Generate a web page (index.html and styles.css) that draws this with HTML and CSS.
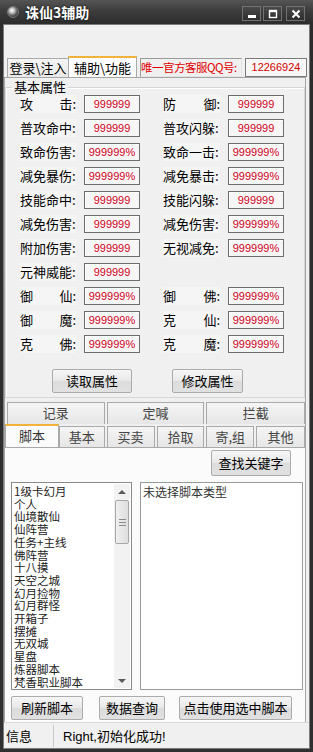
FILE: index.html
```html
<!DOCTYPE html>
<html lang="zh-CN">
<head>
    <meta charset="UTF-8">
    <title>诛仙3辅助</title>
    <link rel="stylesheet" href="styles.css">
</head>
<body>
<div class="window">

    <div class="titlebar">
        <span class="app-icon"></span>
        <span class="title">诛仙3辅助</span>
        <div class="win-btns">
            <span class="win-btn">
                <svg width="10" height="10" viewBox="0 0 10 10"><rect x="1" y="6" width="8" height="3" fill="#fff"/></svg>
            </span>
            <span class="win-btn">
                <svg width="10" height="10" viewBox="0 0 10 10"><rect x="1.5" y="1.5" width="7" height="7" fill="none" stroke="#fff" stroke-width="1.4"/><rect x="1" y="1" width="8" height="2.2" fill="#fff"/></svg>
            </span>
            <span class="win-btn close">
                <svg width="10" height="10" viewBox="0 0 10 10"><path d="M1.5 1.5 L8.5 8.5 M8.5 1.5 L1.5 8.5" stroke="#fff" stroke-width="2"/></svg>
            </span>
        </div>
    </div>

    <div class="client">
        <!-- top tab strip -->
        <div class="top-tabs">
            <div class="ttab">登录\注入</div>
            <div class="ttab active">辅助\功能</div>
            <div class="qq-label">唯一官方客服QQ号:</div>
            <div class="qq-input">12266924</div>
        </div>

        <div class="main-panel">
            <fieldset class="group">
                <legend>基本属性</legend>
                <div class="attr-grid">
                    <div class="lbl spread"><span>攻</span><span>击:</span></div><div class="val">999999</div><div></div>
                    <div class="lbl spread"><span>防</span><span>御:</span></div><div class="val">999999</div>

                    <div class="lbl">普攻命中:</div><div class="val">999999</div><div></div>
                    <div class="lbl">普攻闪躲:</div><div class="val">999999</div>

                    <div class="lbl">致命伤害:</div><div class="val">999999%</div><div></div>
                    <div class="lbl">致命一击:</div><div class="val">999999%</div>

                    <div class="lbl">减免暴伤:</div><div class="val">999999%</div><div></div>
                    <div class="lbl">减免暴击:</div><div class="val">999999%</div>

                    <div class="lbl">技能命中:</div><div class="val">999999</div><div></div>
                    <div class="lbl">技能闪躲:</div><div class="val">999999</div>

                    <div class="lbl">减免伤害:</div><div class="val">999999</div><div></div>
                    <div class="lbl">减免伤害:</div><div class="val">999999%</div>

                    <div class="lbl">附加伤害:</div><div class="val">999999</div><div></div>
                    <div class="lbl">无视减免:</div><div class="val">999999%</div>

                    <div class="lbl">元神威能:</div><div class="val">999999</div><div></div>
                    <div></div><div></div>

                    <div class="lbl spread"><span>御</span><span>仙:</span></div><div class="val">999999%</div><div></div>
                    <div class="lbl spread"><span>御</span><span>佛:</span></div><div class="val">999999%</div>

                    <div class="lbl spread"><span>御</span><span>魔:</span></div><div class="val">999999%</div><div></div>
                    <div class="lbl spread"><span>克</span><span>仙:</span></div><div class="val">999999%</div>

                    <div class="lbl spread"><span>克</span><span>佛:</span></div><div class="val">999999%</div><div></div>
                    <div class="lbl spread"><span>克</span><span>魔:</span></div><div class="val">999999%</div>
                </div>
                <div class="attr-actions">
                    <button class="btn btn-read">读取属性</button>
                    <button class="btn btn-write">修改属性</button>
                </div>
            </fieldset>

            <div class="sub-tabs">
                <div class="tab-row back">
                    <div class="stab wide">记录</div>
                    <div class="stab wide">定喊</div>
                    <div class="stab wide last">拦截</div>
                </div>
                <div class="tab-row front">
                    <div class="stab active">脚本</div>
                    <div class="stab first">基本</div>
                    <div class="stab">买卖</div>
                    <div class="stab">拾取</div>
                    <div class="stab">寄,组</div>
                    <div class="stab last">其他</div>
                </div>
            </div>

            <div class="script-panel">
                <div class="find-row">
                    <button class="btn btn-find">查找关键字</button>
                </div>
                <div class="lists">
                    <div class="listbox">
                        <div class="items">
                            <div>1级卡幻月</div>
                            <div>个人</div>
                            <div>仙境散仙</div>
                            <div>仙阵营</div>
                            <div>任务+主线</div>
                            <div>佛阵营</div>
                            <div>十八摸</div>
                            <div>天空之城</div>
                            <div>幻月捡物</div>
                            <div>幻月群怪</div>
                            <div>开箱子</div>
                            <div>摆摊</div>
                            <div>无双城</div>
                            <div>星盘</div>
                            <div>炼器脚本</div>
                            <div>梵香职业脚本</div>
                        </div>
                        <div class="vscroll">
                            <div class="arrow up"></div>
                            <div class="track">
                                <div class="thumb"><span></span><span></span><span></span></div>
                            </div>
                            <div class="arrow down"></div>
                        </div>
                    </div>
                    <div class="textbox">未选择脚本类型</div>
                </div>
                <div class="script-actions">
                    <button class="btn btn-refresh">刷新脚本</button>
                    <button class="btn btn-query">数据查询</button>
                    <button class="btn btn-use">点击使用选中脚本</button>
                </div>
            </div>
        </div>

        <div class="statusbar">
            <div class="status-key">信息</div>
            <div class="status-msg">Right,初始化成功!</div>
        </div>
    </div>
</div>
</body>
</html>
```

FILE: styles.css
```css
* {
    box-sizing: border-box;
}

body {
    margin: 0;
    background-color: #2b2b2b;
    font-family: "Noto Sans CJK SC", "Liberation Sans", sans-serif;
    font-size: 13px;
    color: #000;
}

.window {
    width: 313px;
    height: 752px;
    display: flex;
    flex-direction: column;
    background: linear-gradient(#555 0, #3e3e3e 10px, #2c2c2c 24px, #303030 100%);
    overflow: hidden;
}

/* title bar */
.titlebar {
    height: 24px;
    flex: none;
    display: flex;
    align-items: center;
    padding-left: 7px;
}

.app-icon {
    width: 12px;
    height: 12px;
    border-radius: 50%;
    background: radial-gradient(circle at 40% 35%, #fff 0, #ccc 25%, #555 60%, #222 100%);
    border: 1px solid #777;
}

.title {
    margin-left: 6px;
    color: #fff;
    font-size: 14px;
    font-weight: bold;
    text-shadow: 0 0 2px #000;
    line-height: 24px;
}

.win-btns {
    margin-left: auto;
    margin-right: 8px;
    display: flex;
    gap: 2px;
    align-self: flex-start;
    margin-top: 6px;
}

.win-btn {
    width: 19px;
    height: 15px;
    border: 1px solid #727272;
    background: linear-gradient(#4a4a4a, #2e2e2e);
    display: flex;
    align-items: center;
    justify-content: center;
}

.win-btn.close {
    margin-left: 2px;
}

/* client area */
.client {
    flex: 1;
    margin: 0 3px 3px;
    background-color: #f0f0f0;
    border: 1px solid #7c7c7c;
    display: flex;
    flex-direction: column;
    padding-top: 31px;
}

.top-tabs {
    height: 21px;
    flex: none;
    display: flex;
    align-items: flex-end;
    padding-left: 3px;
}

.ttab {
    height: 19px;
    width: 62px;
    border: 1px solid #a9a9a9;
    border-bottom: none;
    background: linear-gradient(#f4f4f4, #e9e9e9);
    text-align: center;
    line-height: 18px;
    font-size: 13px;
}

.ttab.active {
    width: 69px;
    height: 21px;
    margin-left: -1px;
    background: #fff;
    border-top: 2px solid #f2b33d;
    line-height: 19px;
}

.qq-label {
    margin-left: 3px;
    width: 102px;
    height: 19px;
    border: 1px solid #9a9a9a;
    border-right-color: #e4e4e4;
    border-bottom-color: #e4e4e4;
    color: #e00000;
    font-size: 11.5px;
    letter-spacing: -0.5px;
    line-height: 17px;
    white-space: nowrap;
    overflow: hidden;
    padding-left: 0;
}

.qq-input {
    margin-left: 3px;
    width: 62px;
    height: 19px;
    border: 1px solid #7a7a7a;
    background-color: #f7f7f7;
    color: #d40000;
    font-family: "Liberation Sans", sans-serif;
    font-size: 11px;
    line-height: 17px;
    text-align: center;
}

.main-panel {
    flex: 1;
    margin: 0 3px 0 0;
    border: 1px solid #a5a5a5;
    border-bottom: none;
    padding-top: 1px;
    display: flex;
    flex-direction: column;
}

/* group box */
.group {
    margin: 0;
    padding: 0 0 4px 0;
    border: 1px solid #d6d6d6;
    box-shadow: inset 1px 1px 0 #fff;
    flex: none;
}

.group legend {
    margin-left: 6px;
    padding: 0 2px;
    font-size: 13px;
    line-height: 16px;
}

.attr-grid {
    display: grid;
    grid-template-columns: 64px 56px 23px 65px 56px;
    grid-auto-rows: 18px;
    row-gap: 6px;
    padding-left: 14px;
    margin-top: 0;
}

.lbl {
    font-size: 13px;
    line-height: 18px;
    white-space: nowrap;
    background-color: #f5f5f5;
    margin-right: 8px;
}

.lbl.spread {
    display: flex;
    justify-content: space-between;
}

.val {
    border: 1px solid #6c6c6c;
    background-color: #f6f6f6;
    box-shadow: inset 1px 1px 0 #fff;
    color: #d0021b;
    font-family: "Liberation Sans", sans-serif;
    font-size: 11px;
    line-height: 16px;
    text-align: center;
    white-space: nowrap;
    overflow: hidden;
}

.attr-actions {
    display: flex;
    gap: 40px;
    padding-left: 46px;
    margin-top: 16px;
}

.btn {
    height: 24px;
    border: 1px solid #acacac;
    border-radius: 2px;
    background: linear-gradient(#f6f6f6, #e8e8e8 50%, #dcdcdc 51%, #e1e1e1);
    font-family: "Noto Sans CJK SC", sans-serif;
    font-size: 13px;
    color: #000;
    padding: 0;
    line-height: 20px;
}

.btn-read {
    width: 80px;
}

.btn-write {
    width: 71px;
}

/* sub tabs */
.sub-tabs {
    margin-top: 5px;
    flex: none;
}

.tab-row {
    display: flex;
    align-items: flex-end;
}

.tab-row.back {
    padding-left: 2px;
    gap: 2px;
    height: 21px;
}

.tab-row.front {
    height: 23px;
}

.stab {
    height: 21px;
    width: 48px;
    border: 1px solid #a9a9a9;
    border-bottom: none;
    background: linear-gradient(#f5f5f5, #e6e6e6);
    text-align: center;
    line-height: 20px;
    color: #444;
    font-size: 13px;
    margin-left: 2px;
}

.stab.wide {
    width: 98px;
    margin-left: 0;
    height: 22px;
}

.stab.wide.last {
    width: 99px;
}

.stab.first {
    margin-left: 0;
    width: 46px;
}

.stab.last {
    width: 49px;
}

.stab.active {
    margin-left: 0;
    width: 54px;
    height: 23px;
    background: #fbfbfb;
    border-top: 2px solid #f2b33d;
    color: #333;
    line-height: 19px;
}

.script-panel {
    flex: 1;
    background-color: #fbfbfb;
    border-top: 1px solid #a9a9a9;
    display: flex;
    flex-direction: column;
    padding: 2px 2px 2px 6px;
}

.find-row {
    display: flex;
    justify-content: flex-end;
    padding-right: 12px;
}

.btn-find {
    width: 80px;
    height: 26px;
}

.lists {
    margin-top: 6px;
    height: 208px;
    display: flex;
    gap: 8px;
}

.listbox {
    width: 121px;
    border: 1px solid #8a8a8a;
    background-color: #fff;
    display: flex;
    overflow: hidden;
}

.items {
    flex: 1;
    padding: 2px 0 0 2px;
    font-size: 11.5px;
    line-height: 12.7px;
    color: #222;
    overflow: hidden;
    white-space: nowrap;
}

.vscroll {
    width: 16px;
    margin: 1px 1px 1px 0;
    display: flex;
    flex-direction: column;
    background-color: #f2f2f2;
}

.arrow {
    height: 15px;
    display: flex;
    align-items: center;
    justify-content: center;
}

.arrow::before {
    content: "";
    border-left: 4px solid transparent;
    border-right: 4px solid transparent;
}

.arrow.up::before {
    border-bottom: 4px solid #5a5a5a;
}

.arrow.down::before {
    border-top: 4px solid #5a5a5a;
}

.track {
    flex: 1;
    padding-top: 1px;
}

.thumb {
    height: 44px;
    margin: 0 1px;
    border: 1px solid #a7a7a7;
    border-radius: 2px;
    background: linear-gradient(90deg, #f0f0f0, #dedede);
    display: flex;
    flex-direction: column;
    justify-content: center;
    align-items: center;
    gap: 2px;
}

.thumb span {
    display: block;
    width: 7px;
    height: 1px;
    background-color: #8a8a8a;
}

.textbox {
    width: 163px;
    border: 1px solid #9a9a9a;
    background-color: #fff;
    font-size: 12px;
    line-height: 15px;
    color: #333;
    padding: 1px 2px;
}

.script-actions {
    margin-top: 6px;
    display: flex;
    gap: 16px;
}

.btn-refresh {
    width: 72px;
}

.btn-query {
    width: 66px;
}

.btn-use {
    width: 113px;
    margin-left: -2px;
}

/* status bar */
.statusbar {
    height: 26px;
    flex: none;
    border-top: 1px solid #d8d8d8;
    display: flex;
    align-items: center;
    font-size: 13px;
}

.status-key {
    width: 50px;
    padding-left: 2px;
    border-right: 1px solid #c8c8c8;
    height: 22px;
    line-height: 22px;
}

.status-msg {
    padding-left: 9px;
    font-family: "Liberation Sans", "Noto Sans CJK SC", sans-serif;
}
```
